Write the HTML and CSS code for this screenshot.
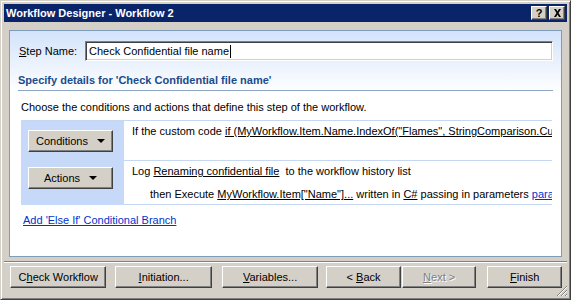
FILE: index.html
```html
<!DOCTYPE html>
<html lang="en">
<head>
  <meta charset="UTF-8"/>
  <title>Workflow Designer - Workflow 2</title>
  <link rel="stylesheet" href="styles.css">
</head>
<body>
  <div class="window">
    <div class="titlebar">
      <span class="title">Workflow Designer - Workflow 2</span>
      <div class="caption-btns">
        <span class="cap-btn">?</span>
        <span class="cap-btn close">
          <svg width="9" height="8" viewBox="0 0 9 8"><path d="M1 0h2l1.5 2.5L6 0h2L5.5 4 8 8H6L4.5 5.5 3 8H1l2.5-4z" fill="#000"/></svg>
        </span>
      </div>
    </div>

    <div class="content">
      <div class="panel">
        <div class="step-row">
          <label class="step-label"><u>S</u>tep Name:</label>
          <div class="input">Check Confidential file name<span class="caret"></span></div>
        </div>

        <h2 class="heading">Specify details for 'Check Confidential file name'</h2>
        <p class="intro">Choose the conditions and actions that define this step of the workflow.</p>

        <div class="rules">
          <div class="side first">
            <button class="btn menu-btn"><span>Conditions</span><span class="arrow"></span></button>
          </div>
          <div class="rule">
            <div class="line">If the custom code <span class="ul">if (MyWorkflow.Item.Name.IndexOf("Flames", StringComparison.CurrentCultureIgnoreCase) &gt;= 0)</span></div>
          </div>
          <div class="side second">
            <button class="btn menu-btn"><span>Actions</span><span class="arrow"></span></button>
          </div>
          <div class="rule last">
            <div class="line">Log <span class="ul">Renaming confidential file</span>&nbsp; to the workflow history list</div>
            <div class="line sub">then Execute <span class="ul">MyWorkflow.Item["Name"]...</span> written in <span class="ul">C#</span> passing in parameters <a class="link">parameters</a></div>
          </div>
        </div>

        <a class="link branch">Add 'Else If' Conditional Branch</a>
      </div>

      <div class="separator"></div>

      <div class="footer">
        <button class="btn wide"><span>C<u>h</u>eck Workflow</span></button>
        <button class="btn wide gap-a"><span><u>I</u>nitiation...</span></button>
        <button class="btn wide gap-b"><span><u>V</u>ariables...</span></button>
        <button class="btn nav gap-c"><span>&lt; <u>B</u>ack</span></button>
        <button class="btn nav gap-d disabled"><span><u>N</u>ext &gt;</span></button>
        <button class="btn nav gap-e"><span><u>F</u>inish</span></button>
      </div>
    </div>

    <svg class="grip" width="12" height="12" viewBox="0 0 12 12">
      <path d="M11 1L1 11M11 5L5 11M11 9L9 11" stroke="#808080" stroke-width="1"/>
      <path d="M11 2L2 11M11 6L6 11M11 10L10 11" stroke="#fff" stroke-width="1"/>
    </svg>
  </div>
</body>
</html>
```

FILE: styles.css
```css
:root {
  --face: #d4d0c8;
  --shadow: #808080;
  --dark: #404040;
  --navy: #0a246a;
  --panel-border: #7f9db9;
  --rule-line: #c6d7f1;
  --side-blue: #c6d9f8;
  --heading: #1b4b8c;
  --link: #0033cc;
}
* { box-sizing: border-box; }
body {
  margin: 0;
  width: 571px;
  height: 300px;
  overflow: hidden;
  font-family: 'Liberation Sans', Arial, sans-serif;
  font-size: 11px;
  color: #000;
  background: var(--face);
}

/* Window frame */
.window {
  position: relative;
  width: 571px;
  height: 300px;
  padding: 3px;
  border: 1px solid;
  border-color: var(--face) var(--dark) var(--dark) var(--face);
  box-shadow: inset 1px 1px #fff, inset -1px -1px var(--shadow);
  display: flex;
  flex-direction: column;
}

.titlebar {
  height: 18px;
  background: var(--navy);
  color: #fff;
  display: flex;
  align-items: center;
  justify-content: space-between;
  padding: 0 2px;
}
.title { font-weight: bold; font-size: 11px; }
.caption-btns { display: flex; gap: 2px; }
.cap-btn {
  width: 16px;
  height: 14px;
  background: var(--face);
  border: 1px solid;
  border-color: #fff var(--dark) var(--dark) #fff;
  box-shadow: inset -1px -1px var(--shadow);
  color: #000;
  font-weight: bold;
  font-size: 11px;
  line-height: 12px;
  display: flex;
  align-items: center;
  justify-content: center;
}

.content {
  flex: 1;
  display: flex;
  flex-direction: column;
  padding: 8px 5px 0 5px;
}

/* Blue details panel */
.panel {
  height: 227px;
  border: 1px solid var(--panel-border);
  background: linear-gradient(#d3e3fb, #ffffff 62px);
  padding: 10px 8px 0 0;
  display: flex;
  flex-direction: column;
  align-items: flex-start;
}
.step-row { display: flex; align-items: center; width: 100%; }
.step-label { width: 75px; padding-left: 9px; white-space: nowrap; }
.input {
  flex: 1;
  height: 20px;
  background: #fff;
  border: 1px solid;
  border-color: var(--shadow) #fff #fff var(--shadow);
  box-shadow: inset 1px 1px var(--dark), inset -1px -1px var(--face);
  padding: 0 3px;
  display: flex;
  align-items: center;
}
.caret { display: inline-block; width: 1px; height: 13px; background: #000; margin-left: 1px; }

.heading {
  margin: 13px 0 0 8px;
  width: 535px;
  font-size: 11px;
  font-weight: bold;
  color: var(--heading);
  padding-bottom: 3px;
  border-bottom: 1px solid #8da6c4;
  line-height: 13px;
}
.intro {
  margin: 10px 0 0 11px;
  width: 531px;
  line-height: 13px;
  padding-bottom: 6px;
  border-bottom: 1px solid var(--rule-line);
}

/* Conditions / actions table */
.rules {
  margin-left: 11px;
  width: 531px;
  display: grid;
  grid-template-columns: 103px minmax(0, 1fr);
  grid-template-rows: 39px 45px;
}
.side { background: var(--side-blue); padding-left: 7px; }
.side.first { padding-top: 9px; }
.side.second { padding-top: 7px; }
.rule {
  border-top: 1px solid var(--rule-line);
  padding: 4px 0 0 8px;
  white-space: nowrap;
  overflow: hidden;
  background: #fff;
}
.rules .rule:nth-child(2) { border-top: none; }
.rule.last { border-bottom: 1px solid var(--rule-line); }
.line { line-height: 13px; }
.line.sub { margin-top: 10px; padding-left: 18px; }
.ul { text-decoration: underline; }

.link { color: var(--link); text-decoration: underline; cursor: pointer; }
.branch { margin: 9px 0 0 13px; line-height: 13px; }

/* Buttons */
.btn {
  font-family: inherit;
  font-size: 11px;
  color: #000;
  height: 22px;
  background: var(--face);
  border: 1px solid;
  border-color: #fff var(--dark) var(--dark) #fff;
  box-shadow: inset -1px -1px var(--shadow), inset 1px 1px var(--face);
  padding: 0;
  display: flex;
  align-items: center;
  justify-content: center;
}
.menu-btn { width: 85px; gap: 9px; }
.arrow {
  width: 0; height: 0;
  border-left: 4px solid transparent;
  border-right: 4px solid transparent;
  border-top: 4px solid #000;
}

.separator {
  margin: 4px -5px 0 -5px;
  height: 2px;
  border-top: 1px solid var(--shadow);
  border-bottom: 1px solid #fff;
}
.footer { display: flex; padding: 3px 0 0 1px; }
.wide { width: 97px; }
.nav { width: 75px; }
.gap-a { margin-left: 9px; }
.gap-b { margin-left: 10px; }
.gap-c { margin-left: 8px; }
.gap-d { margin-left: 1px; }
.gap-e { margin-left: 11px; }
.disabled { color: var(--shadow); text-shadow: 1px 1px #fff; }

.grip { position: absolute; right: 2px; bottom: 2px; }
```
